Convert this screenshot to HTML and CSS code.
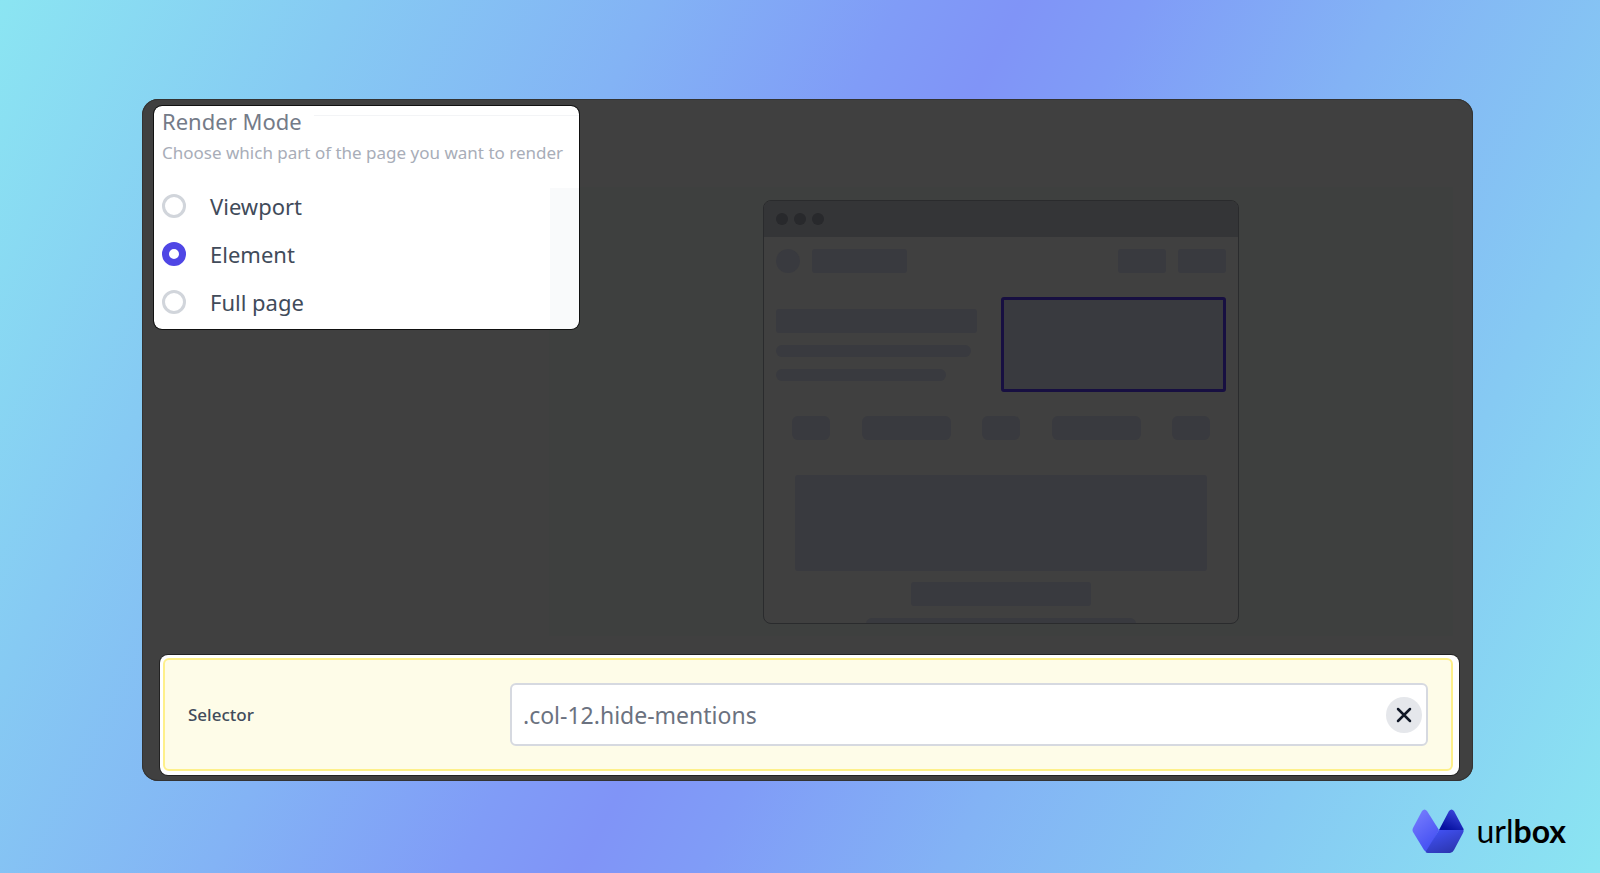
FILE: index.html
```html
<!DOCTYPE html>
<html lang="en">

<head>
    <meta charset="utf-8">
    <title>Urlbox Render Mode</title>
    <link rel="stylesheet" href="styles.css">
</head>

<body>
    <main class="panel">
        <div class="top">
            <fieldset class="render-mode" aria-labelledby="mode-title">
                <h1 id="mode-title">Render Mode</h1>
                <p>Choose which part of the page you want to render</p>
                <div class="options">
                    <label><input type="radio" name="mode" value="viewport">Viewport</label>
                    <label><input type="radio" name="mode" value="element" checked>Element</label>
                    <label><input type="radio" name="mode" value="full">Full page</label>
                </div>
            </fieldset>

            <div class="preview">
                <div class="browser">
                    <div class="browser-bar">
                        <span class="dot"></span>
                        <span class="dot"></span>
                        <span class="dot"></span>
                    </div>
                    <div class="page">
                        <div class="page-nav">
                            <span class="block avatar"></span>
                            <span class="block brand"></span>
                            <span class="block link"></span>
                            <span class="block link"></span>
                        </div>
                        <div class="page-hero">
                            <div class="hero-text">
                                <span class="block title"></span>
                                <span class="block line"></span>
                                <span class="block line short"></span>
                            </div>
                            <div class="block hero-image"></div>
                        </div>
                        <div class="page-tags">
                            <span class="block tag"></span>
                            <span class="block tag wide"></span>
                            <span class="block tag"></span>
                            <span class="block tag wide"></span>
                            <span class="block tag"></span>
                        </div>
                        <div class="block banner"></div>
                        <div class="block caption"></div>
                        <div class="block footer-line"></div>
                    </div>
                </div>
            </div>
        </div>

        <div class="selector">
            <div class="selector-inner">
                <label for="selector">Selector</label>
                <div class="field">
                    <input type="text" id="selector" value=".col-12.hide-mentions">
                    <button type="button" aria-label="Clear">
                        <svg viewBox="0 0 16 16" width="16" height="16">
                            <path d="M2 2L14 14M14 2L2 14" />
                        </svg>
                    </button>
                </div>
            </div>
        </div>
    </main>

    <footer class="logo">
        <svg viewBox="0 0 52 44" width="52" height="44">
            <defs>
                <linearGradient id="left" x1="0" y1="0" x2="0.5" y2="1">
                    <stop offset="0" stop-color="#7b80ff" />
                    <stop offset="1" stop-color="#4450f2" />
                </linearGradient>
                <linearGradient id="top" x1="1" y1="0" x2="0.4" y2="1">
                    <stop offset="0" stop-color="#4450e6" />
                    <stop offset="1" stop-color="#0611a0" />
                </linearGradient>
                <linearGradient id="base" x1="0.2" y1="0" x2="0.8" y2="1">
                    <stop offset="0" stop-color="#4252f5" />
                    <stop offset="1" stop-color="#2a34ac" />
                </linearGradient>
            </defs>
            <path fill="url(#left)" d="M10 2Q12.500 -1 15 2L27 21L15 43Q13 42.500 12 41L1 23Q0 21 1 19Z" />
            <path fill="url(#top)" d="M27 21L37 2Q39.500 -1 42 2L51 19Q52 20 51.500 21Z" />
            <path fill="url(#base)" d="M27 21H51.500Q52 22 51 24L42 41Q40.500 44 38 44H16Q14.500 44 13.500 43Z" />
        </svg>
        <span>url<b>box</b></span>
    </footer>
</body>

</html>
```

FILE: styles.css
```css
* {
    box-sizing: border-box;
}

body {
    margin: 0;
    min-height: 100vh;
    padding: 99px 127px 0 142px;
    font-family: "Noto Sans", "Open Sans", sans-serif;
    background: linear-gradient(117deg, #8be5f2 0%, #86caf3 17%, #83b3f5 32%, #809cf7 44%, #8094f7 50%, #809cf7 56%, #83b3f5 68%, #86caf3 83%, #8be5f2 100%);
}

.panel {
    background-color: #404040;
    border-radius: 16px;
    padding: 7px 14px 6px 12px;
    box-shadow: inset 0 0 0 1px #333;
}

.top {
    display: flex;
    align-items: flex-start;
}

.render-mode {
    width: 425px;
    height: 223px;
    margin: 0;
    padding: 0 9px 0 8px;
    border: none;
    border-radius: 8px;
    background: linear-gradient(#f9fafb, #f9fafb) no-repeat 100% 100% / 29px 141px #fff;
    box-shadow: 0 0 0 1px #111;
    position: relative;
    z-index: 1;
}

h1 {
    display: flex;
    align-items: center;
    gap: 12px;
    margin: 0 -9px 0 0;
    font-size: 22px;
    font-weight: 400;
    line-height: 30px;
    color: #747b88;
}

h1::after {
    content: "";
    flex: 1;
    height: 1px;
    margin-bottom: 12px;
    background-color: #f3f4f6;
}

p {
    margin: 0;
    font-size: 17px;
    line-height: 34px;
    color: #a8adb8;
    white-space: nowrap;
}

.options {
    margin-top: 12px;
}

.options label {
    display: flex;
    align-items: center;
    gap: 24px;
    height: 48px;
    font-size: 22px;
    color: #414b5a;
}

input[type="radio"] {
    appearance: none;
    width: 24px;
    height: 24px;
    margin: 0;
    border: 3px solid #d1d5db;
    border-radius: 50%;
    background-color: #fff;
}

input[type="radio"]:checked {
    border: 7px solid #4f46e5;
}

.preview {
    flex: 1;
    display: flex;
    justify-content: center;
    margin: 81px 6px 0 -30px;
    padding: 13px 0 12px;
    background-color: #3e403f;
}

.browser {
    width: 476px;
    height: 424px;
    border: 1px solid #2a2b2d;
    border-radius: 8px;
    overflow: hidden;
    background-color: #404040;
}

.browser-bar {
    display: flex;
    align-items: center;
    gap: 6px;
    height: 36px;
    padding: 0 12px;
    background-color: #343537;
}

.dot {
    width: 12px;
    height: 12px;
    border-radius: 50%;
    background-color: #28292c;
}

.page {
    display: flex;
    flex-direction: column;
    align-items: center;
    padding: 12px;
}

.block {
    flex-shrink: 0;
    background-color: #393a3f;
    border-radius: 3px;
}

.page-nav {
    display: flex;
    gap: 12px;
    width: 100%;
    height: 24px;
}

.avatar {
    width: 24px;
    border-radius: 50%;
}

.brand {
    width: 95px;
    margin-right: auto;
}

.link {
    width: 48px;
}

.page-hero {
    display: flex;
    justify-content: space-between;
    align-items: center;
    width: 100%;
    margin-top: 24px;
}

.hero-text {
    display: flex;
    flex-direction: column;
    gap: 12px;
    width: 201px;
}

.title {
    height: 24px;
}

.line {
    width: 195px;
    height: 12px;
    border-radius: 6px;
}

.line.short {
    width: 170px;
}

.hero-image {
    width: 225px;
    height: 95px;
    border: 3px solid #170f41;
}

.page-tags {
    display: flex;
    justify-content: space-between;
    width: 418px;
    margin-top: 24px;
}

.tag {
    width: 38px;
    height: 24px;
    border-radius: 6px;
}

.tag.wide {
    width: 89px;
}

.banner {
    width: 412px;
    height: 96px;
    margin-top: 35px;
}

.caption {
    width: 180px;
    height: 24px;
    margin-top: 11px;
}

.footer-line {
    width: 270px;
    height: 12px;
    margin-top: 12px;
    border-radius: 6px;
}

.selector {
    margin: 19px 0 0 6px;
    padding: 3px 6px 4px 3px;
    border-radius: 8px;
    background-color: #fff;
    box-shadow: 0 0 0 1px #222;
}

.selector-inner {
    display: flex;
    align-items: center;
    padding: 23px 23px;
    border: 2px solid #fef08a;
    border-radius: 6px;
    background-color: #fefce8;
}

.selector-inner label {
    width: 322px;
    font-size: 17px;
    font-weight: 500;
    color: #414b5a;
}

.field {
    flex: 1;
    display: flex;
    align-items: center;
    height: 63px;
    padding: 0 4px 0 11px;
    border: 2px solid #d6d9e0;
    border-radius: 6px;
    background-color: #fff;
}

.field input {
    flex: 1;
    padding: 0;
    border: none;
    outline: none;
    font-family: inherit;
    font-size: 23px;
    color: #6b7280;
}

.field button {
    display: flex;
    align-items: center;
    justify-content: center;
    width: 36px;
    height: 36px;
    padding: 0;
    border: none;
    border-radius: 50%;
    background-color: #e5e7eb;
    cursor: pointer;
}

.field path {
    stroke: #111827;
    stroke-width: 2.5;
    stroke-linecap: round;
}

.logo {
    display: flex;
    align-items: center;
    justify-content: flex-end;
    gap: 12px;
    margin: 28px -93px 0 0;
    font-family: "Lato", sans-serif;
    font-size: 32px;
    line-height: 44px;
    color: #000;
}
```
